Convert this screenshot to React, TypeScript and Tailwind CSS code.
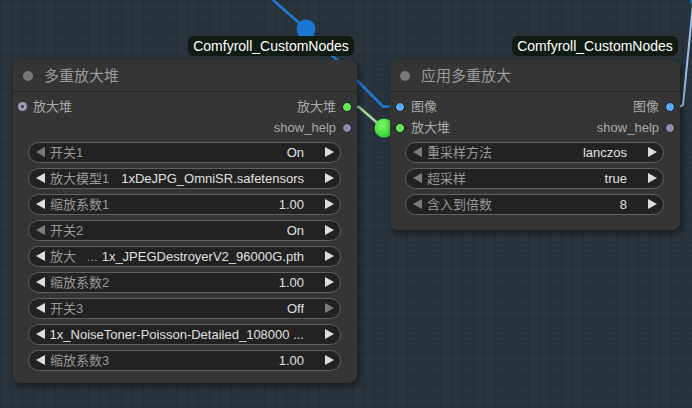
import React from "react";

type W = { label?: string; value: string; leftDim?: boolean; rightDim?: boolean };
type S = { left?: { label: string; kind: "ring" | "blue" | "green" }; right?: { label: string; kind: "green" | "gray" | "blue" } };

function Tri({ dir, dim }: { dir: "l" | "r"; dim?: boolean }) {
  return (
    <svg width="9" height="10" viewBox="0 0 9 10" className="shrink-0">
      <polygon points={dir === "l" ? "0,5 9,0 9,10" : "0,0 9,5 0,10"} fill={dim ? "#7b7b7b" : "#dddddd"} />
    </svg>
  );
}

function Widget({ w }: { w: W }) {
  return (
    <div className="flex items-center h-[21px] rounded-full border border-[#616161] bg-[#222222] pl-[7px] pr-[6px] ml-[15px] mr-[16px]">
      <Tri dir="l" dim={w.leftDim} />
      {w.label && <span className="ml-[5px] text-[#999999] whitespace-pre">{w.label}</span>}
      <span className="flex-1 text-right text-[#e0e0e0] whitespace-pre overflow-hidden">{w.value}</span>
      <span className="w-[21px] shrink-0" />
      <Tri dir="r" dim={w.rightDim} />
    </div>
  );
}

function Dot({ kind }: { kind: "ring" | "blue" | "green" | "gray" }) {
  if (kind === "ring")
    return (
      <div className="w-[9px] h-[9px] rounded-full bg-[#9d9cb8] flex items-center justify-center shrink-0">
        <div className="w-[3px] h-[3px] rounded-full bg-[#3a3a3a]" />
      </div>
    );
  if (kind === "blue") return <div className="w-[10px] h-[10px] rounded-full bg-[#5aaaf0] border border-[#1e1e1e] shrink-0" />;
  if (kind === "green") return <div className="w-[10px] h-[10px] rounded-full bg-[#63e853] border border-[#1e1e1e] shrink-0" />;
  return <div className="w-[10px] h-[10px] rounded-full bg-[#8e8ca2] border border-[#1e1e1e] shrink-0" />;
}

function SlotRow({ s }: { s: S }) {
  return (
    <div className="flex items-center justify-between h-[21px] px-[5px]">
      <div className="flex items-center">
        {s.left && (
          <>
            <Dot kind={s.left.kind} />
            <span className="ml-[6px] text-[#aaaaaa]">{s.left.label}</span>
          </>
        )}
      </div>
      <div className="flex items-center">
        {s.right && (
          <>
            <span className="mr-[6px] text-[#aaaaaa]">{s.right.label}</span>
            <Dot kind={s.right.kind} />
          </>
        )}
      </div>
    </div>
  );
}

function Node({ cls, title, slots, widgets }: { cls: string; title: string; slots: S[]; widgets: W[] }) {
  return (
    <div className={"absolute rounded-[8px] bg-[#353535] shadow-[2px_3px_6px_rgba(0,0,0,0.45)] text-[13px] leading-[21px] " + cls}>
      <div className="flex items-center h-[32px] border-b border-[#282828] pl-[10px]">
        <div className="w-[10px] h-[10px] rounded-full bg-[#787878]" />
        <span className="ml-[11px] text-[15px] text-[#9a9a9a]">{title}</span>
      </div>
      <div className="pt-[4px]">
        {slots.map((s, i) => (
          <SlotRow key={i} s={s} />
        ))}
      </div>
      <div className="mt-[3.5px] flex flex-col gap-[5px]">
        {widgets.map((w, i) => (
          <Widget key={i} w={w} />
        ))}
      </div>
    </div>
  );
}

function Badge({ cls }: { cls: string }) {
  return (
    <div className={"absolute h-[20px] rounded-[6px] bg-[#101b11] text-white text-[14px] leading-[20px] flex items-center justify-center " + cls}>
      Comfyroll_CustomNodes
    </div>
  );
}

export default function App() {
  const w1: W[] = [
    { label: "开关1", value: "On", leftDim: true },
    { label: "放大模型1", value: "1xDeJPG_OmniSR.safetensors" },
    { label: "缩放系数1", value: "1.00" },
    { label: "开关2", value: "On", leftDim: true },
    { label: "放大   ...", value: "1x_JPEGDestroyerV2_96000G.pth" },
    { label: "缩放系数2", value: "1.00" },
    { label: "开关3", value: "Off", rightDim: true },
    { value: "1x_NoiseToner-Poisson-Detailed_108000 ..." },
    { label: "缩放系数3", value: "1.00" },
  ];
  const w2: W[] = [
    { label: "重采样方法", value: "lanczos", leftDim: true },
    { label: "超采样", value: "true", leftDim: true },
    { label: "含入到倍数", value: "8", leftDim: true },
  ];
  return (
    <div className="relative w-[692px] h-[408px] overflow-hidden bg-[#29343d] bg-[linear-gradient(to_right,#242e36_1px,transparent_1px),linear-gradient(to_bottom,#242e36_1px,transparent_1px)] bg-[size:11px_11px] font-['Liberation_Sans','Noto_Sans_CJK_SC',sans-serif]">
      <svg className="absolute inset-0" width="692" height="408" viewBox="0 0 692 408">
        <defs>
          <radialGradient id="gg" cx="0.4" cy="0.35" r="0.7">
            <stop offset="0" stopColor="#7dfa6a" />
            <stop offset="1" stopColor="#2fcf2f" />
          </radialGradient>
        </defs>
        <polyline points="273,0 306,29 383,106.5 395,106.5" stroke="#1f7ad2" strokeWidth="2.5" fill="none" />
        <circle cx="306" cy="29" r="9.5" fill="#1a78d4" />
        <polyline points="351,107 359,107 382,127 396,128" stroke="#a8d8a2" strokeWidth="2.5" fill="none" />
        <circle cx="384" cy="128" r="9.5" fill="url(#gg)" />
        <polyline points="679,107 683,105 694,-6" stroke="#9cc0ee" strokeWidth="2" fill="none" />
        <circle cx="700" cy="-1" r="10" fill="#1a78d4" />
      </svg>
      <Node
        cls="left-[13px] top-[60px] w-[344px] h-[323px]"
        title="多重放大堆"
        slots={[
          { left: { label: "放大堆", kind: "ring" }, right: { label: "放大堆", kind: "green" } },
          { right: { label: "show_help", kind: "gray" } },
        ]}
        widgets={w1}
      />
      <Node
        cls="left-[390px] top-[60px] w-[290px] h-[170px]"
        title="应用多重放大"
        slots={[
          { left: { label: "图像", kind: "blue" }, right: { label: "图像", kind: "blue" } },
          { left: { label: "放大堆", kind: "green" }, right: { label: "show_help", kind: "gray" } },
        ]}
        widgets={w2}
      />
      <Badge cls="left-[188px] top-[36px] w-[166px]" />
      <Badge cls="left-[512px] top-[36px] w-[166px]" />
    </div>
  );
}
